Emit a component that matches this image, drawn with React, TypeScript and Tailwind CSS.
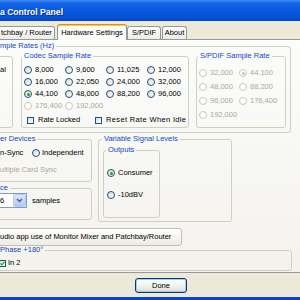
import type { ReactNode } from 'react';

const codecRates: [string, 'on' | 'off' | ''][] = [
  ['8,000', ''], ['9,600', ''], ['11,025', ''], ['12,000', ''],
  ['16,000', ''], ['22,050', ''], ['24,000', ''], ['32,000', ''],
  ['44,100', 'on'], ['48,000', ''], ['88,200', ''], ['96,000', ''],
  ['176,400', 'off'], ['192,000', 'off'],
];

const spdifRates: [string, boolean][] = [
  ['32,000', false], ['44,100', true],
  ['48,000', false], ['88,200', false],
  ['96,000', false], ['176,400', false],
  ['192,000', false],
];

const Radio = ({ on = false, off = false }: { on?: boolean; off?: boolean }) => (
  <span
    className={
      off
        ? 'flex h-[8px] w-[8px] shrink-0 items-center justify-center rounded-full border border-[#CAC8BB] bg-white'
        : 'flex h-[8px] w-[8px] shrink-0 items-center justify-center rounded-full border border-[#1C5180] bg-[linear-gradient(135deg,#DCD9CF,#FFFFFF)]'
    }
  >
    {on && <span className={off ? 'h-[3px] w-[3px] rounded-full bg-[#C4C2B7]' : 'h-[3px] w-[3px] rounded-full bg-[#21A121]'} />}
  </span>
);

const Check = ({ on = false }: { on?: boolean }) => (
  <span className="flex h-[7px] w-[7px] shrink-0 items-center justify-center border border-[#1C5180] bg-[linear-gradient(135deg,#DCD9CF,#FFFFFF)]">
    {on && (
      <svg width="5" height="5" viewBox="0 0 5 5">
        <path d="M0.5 2.3 L1.9 3.8 L4.5 0.9" stroke="#21A121" strokeWidth="1.2" fill="none" />
      </svg>
    )}
  </span>
);

const Group = ({
  title,
  className,
  legendClass,
  children,
}: {
  title: string;
  className: string;
  legendClass: string;
  children?: ReactNode;
}) => (
  <fieldset className={`min-w-0 shrink-0 rounded-[3px] border border-[#D0D0BF] ${className}`}>
    <legend className={`px-[2px] leading-[10px] text-[#1546C4] ${legendClass}`}>{title}</legend>
    {children}
  </fieldset>
);

const App = () => {
  return (
    <div className="flex h-[300px] w-[300px] flex-col overflow-hidden bg-[#ECE9D8] font-['Liberation_Sans',Arial,sans-serif] text-[7.5px] leading-[10px] text-black">
      {/* title bar */}
      <div className="flex h-[21px] shrink-0 items-center bg-[linear-gradient(180deg,#3D8EF6_0%,#1666E6_14%,#0758DE_50%,#0553D9_82%,#0343C4_100%)] pt-[2px] text-[8.6px] font-bold text-white [text-shadow:1px_1px_0_#0F2D9C]">
        a Control Panel
      </div>

      {/* tabs */}
      <div className="flex h-[18px] shrink-0 items-end">
        <div className="ml-[-2px] flex h-[13px] w-[57px] items-center rounded-t-[3px] border-x border-t border-[#919B9C] bg-[linear-gradient(#FFFFFF,#ECEBE6)] pl-[2px]">
          tchbay / Router
        </div>
        <div className="relative z-10 mb-[-1px] ml-[2px] flex h-[16px] w-[70px] items-center justify-center rounded-t-[3px] border-x border-t border-[#919B9C] border-t-[#E68B2C] bg-[#FCFCFB] shadow-[inset_0_1px_0_#FFC73C]">
          Hardware Settings
        </div>
        <div className="flex h-[13px] w-[34px] items-center justify-center rounded-t-[3px] border-x border-t border-[#919B9C] bg-[linear-gradient(#FFFFFF,#ECEBE6)]">
          S/PDIF
        </div>
        <div className="ml-[1px] flex h-[13px] w-[25px] items-center justify-center rounded-t-[3px] border-x border-t border-[#919B9C] bg-[linear-gradient(#FFFFFF,#ECEBE6)]">
          About
        </div>
      </div>

      {/* tab page */}
      <div className="h-[234px] shrink-0 border-y border-[#919B9C] bg-[linear-gradient(#FCFCFB,#F3F2ED)]">
        <div className="pt-[1px]">
          <Group title="mple Rates (Hz)" className="ml-[-10px] h-[92px] w-[301px]" legendClass="ml-[7px]">
            <div className="flex">
              <div className="mt-[5px] h-[72px] w-[22px] shrink-0 rounded-[3px] border border-[#D0D0BF] pl-[8px] pt-[8px]">
                al
              </div>

              <Group title="Codec Sample Rate" className="ml-[8px] h-[77px] w-[168px]" legendClass="ml-0">
                <div className="mt-[3px] grid grid-cols-[41px_41px_41px_41px] pl-[2px]">
                  {codecRates.map(([label, state]) => (
                    <div key={label} className="flex h-[12px] items-center">
                      <Radio on={state === 'on'} off={state === 'off'} />
                      <span className={state === 'off' ? 'ml-[3px] text-[#ACA899]' : 'ml-[3px]'}>{label}</span>
                    </div>
                  ))}
                </div>
                <div className="mt-[2px] flex h-[12px] items-center pl-[5px]">
                  <div className="flex w-[68px] items-center">
                    <Check />
                    <span className="ml-[4px]">Rate Locked</span>
                  </div>
                  <div className="flex items-center">
                    <Check />
                    <span className="ml-[4px] whitespace-nowrap tracking-[0.35px]">Reset Rate When Idle</span>
                  </div>
                </div>
              </Group>

              <Group title="S/PDIF Sample Rate" className="ml-[7px] h-[77px] w-[90px]" legendClass="ml-[1px]">
                <div className="mt-[5px] grid grid-cols-[40px_40px] pl-[2px]">
                  {spdifRates.map(([label, on]) => (
                    <div key={label} className="flex h-[14px] items-center">
                      <Radio on={on} off />
                      <span className="ml-[3px] text-[#ACA899]">{label}</span>
                    </div>
                  ))}
                </div>
              </Group>
            </div>
          </Group>

          <div className="flex">
            <div className="ml-[-10px] w-[102px] shrink-0">
              <Group title="er Devices" className="mt-[1px] h-[48px] w-[102px]" legendClass="ml-[7px]">
                <div className="mt-[4px] flex h-[10px] items-center pl-[9px]">
                  <span className="w-[32px]">n-Sync</span>
                  <Radio />
                  <span className="ml-[2px]">Independent</span>
                </div>
                <div className="mt-[7px] h-[10px] pl-[9px] text-[#ACA899]">ultiple Card Sync</div>
              </Group>
              <Group title="ce" className="mt-[1px] h-[37px] w-[102px]" legendClass="ml-[7px]">
                <div className="flex items-center">
                  <div className="flex h-[15px] w-[36px] border border-[#7F9DB9] bg-white">
                    <span className="flex-1 pl-[8px] leading-[13px]">6</span>
                    <span className="flex w-[13px] items-center justify-center rounded-[2px] border border-[#B7CAF5] bg-[linear-gradient(#DCE7FD,#B3C8F5)]">
                      <svg width="7" height="5" viewBox="0 0 7 5">
                        <path d="M1 1 L3.5 3.5 L6 1" stroke="#4D6185" strokeWidth="1.4" fill="none" />
                      </svg>
                    </span>
                  </div>
                  <span className="ml-[5px]">samples</span>
                </div>
              </Group>
            </div>

            <Group title="Variable Signal Levels" className="ml-[6px] mt-[1px] h-[88px] w-[134px]" legendClass="ml-[3px]">
              <div className="pl-[4px]">
                <Group title="Outputs" className="mt-[1px] h-[73px] w-[57px]" legendClass="ml-[2px]">
                  <div className="mt-[13px] flex h-[10px] items-center pl-[3px]">
                    <Radio on />
                    <span className="ml-[3px]">Consumer</span>
                  </div>
                  <div className="mt-[12px] flex h-[10px] items-center pl-[3px]">
                    <Radio />
                    <span className="ml-[3px]">-10dBV</span>
                  </div>
                </Group>
              </div>
            </Group>
          </div>

          <div className="ml-[-10px] mt-[6px] flex h-[18px] w-[192px] items-center rounded-[3px] border border-[#C3C0B2] bg-[linear-gradient(#FFFFFF,#ECEBE6)] pl-[9px] whitespace-nowrap">
            udio app use of Monitor Mixer and Patchbay/Router
          </div>

          <Group title="Phase +180°" className="ml-[-10px] mt-[-1px] h-[26px] w-[302px]" legendClass="ml-[7px]">
            <div className="mt-[3px] flex h-[10px] items-center pl-[8px]">
              <Check on />
              <span className="ml-[2px]">In 2</span>
            </div>
          </Group>
        </div>
      </div>

      {/* footer */}
      <div className="h-[24px] shrink-0 pl-[135px] pt-[5px]">
        <div className="flex h-[15px] w-[52px] items-center justify-center rounded-[3px] border border-[#003C74] bg-[linear-gradient(#FFFFFF,#F0F0EA_60%,#DCD8CC)] shadow-[inset_0_0_0_1px_#A9C5F2]">
          Done
        </div>
      </div>
      <div className="h-[3px] shrink-0 bg-[#0842D0]" />
    </div>
  );
};

export default App;
